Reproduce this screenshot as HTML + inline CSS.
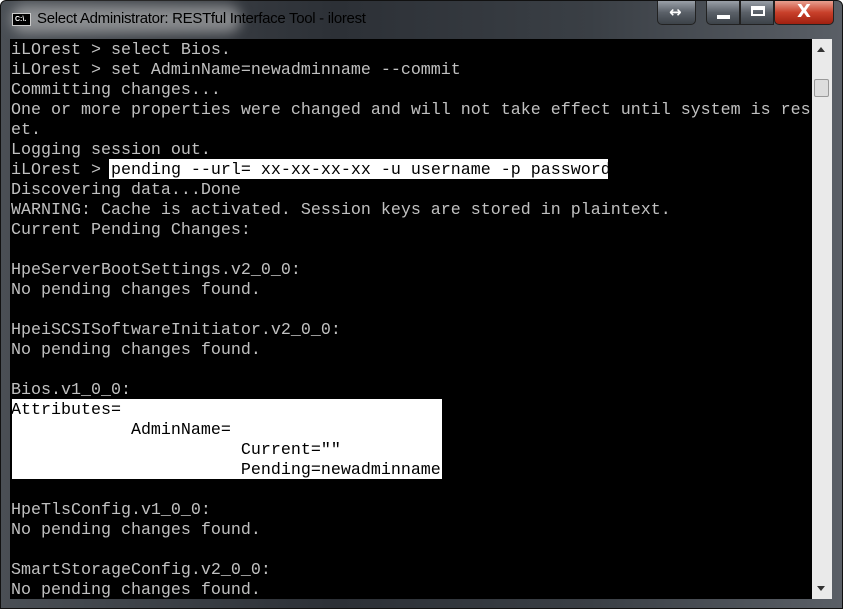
<!DOCTYPE html>
<html><head><style>
html,body{margin:0;padding:0;width:843px;height:609px;overflow:hidden;background:#fff}
.win{position:absolute;left:0;top:0;width:843px;height:609px;background:linear-gradient(90deg,#4a4f55,#2c3036 40%,#3a3f45 70%,#5a5f66);border-radius:6px 6px 0 0;box-sizing:border-box;border:1px solid #111}
.glow{position:absolute;left:10px;top:4px;width:230px;height:28px;background:rgba(200,200,200,0.55);filter:blur(6px);border-radius:14px}
.title{position:absolute;left:36px;top:9px;font:15px "Liberation Sans",sans-serif;color:#000;letter-spacing:-0.3px}
.ico{position:absolute;left:11px;top:12px;width:19px;height:13px;background:#000;border:1px solid #ccc;box-sizing:border-box;color:#fff;font:bold 7px "Liberation Sans",sans-serif;line-height:11px;padding-left:2px}
.btn{position:absolute;top:0;height:24px;border:1px solid #222;border-top:none;border-radius:0 0 5px 5px;box-sizing:border-box;background:linear-gradient(#9aa0a8,#5a6068 50%,#3c4248)}
.content{position:absolute;left:9px;top:38px;width:802px;height:560px;background:#000;overflow:hidden}
.sb{position:absolute;left:811px;top:38px;width:20px;height:560px;background:#eaeaea}
pre{margin:0;position:absolute;left:1px;top:2px;font:16.67px/20px "Liberation Mono",monospace;color:#c0c0c0;white-space:pre}
.hl{position:absolute;background:#fff}
.k{color:#000}
</style></head><body>
<div class="win">
<div class="glow"></div>
<div class="ico">C:\.</div>
<div class="title">Select Administrator: RESTful Interface Tool - ilorest</div>
<div class="btn" style="left:656px;width:39px"><span style="position:absolute;left:11px;top:2px;color:#fff;font:bold 15px 'DejaVu Sans',sans-serif">↔</span></div>
<div class="btn" style="left:705px;width:34px;border-radius:0 0 0 5px"><div style="position:absolute;left:10px;top:14px;width:13px;height:4px;background:#fff"></div></div>
<div class="btn" style="left:739px;width:34px;border-radius:0"><div style="position:absolute;left:10px;top:5px;width:14px;height:10px;border:2px solid #fff;border-top-width:4px;box-sizing:border-box"></div></div>
<div class="btn" style="left:773px;width:60px;background:linear-gradient(#e8a090,#c8402a 50%,#a02010)"><span style="position:absolute;left:22px;top:0px;color:#fff;font:bold 18px 'DejaVu Sans',sans-serif">X</span></div>
<div class="content">
<div class="hl" style="left:99px;top:120px;width:499px;height:20px"></div>
<div class="hl" style="left:2px;top:360px;width:430px;height:80px"></div>
<pre>iLOrest > select Bios.
iLOrest > set AdminName=newadminname --commit
Committing changes...
One or more properties were changed and will not take effect until system is res
et.
Logging session out.
iLOrest > <span class="k">pending --url= xx-xx-xx-xx -u username -p password</span>
Discovering data...Done
WARNING: Cache is activated. Session keys are stored in plaintext.
Current Pending Changes:

HpeServerBootSettings.v2_0_0:
No pending changes found.

HpeiSCSISoftwareInitiator.v2_0_0:
No pending changes found.

Bios.v1_0_0:
<span class="k">Attributes=
            AdminName=
                       Current=""
                       Pending=newadminname</span>

HpeTlsConfig.v1_0_0:
No pending changes found.

SmartStorageConfig.v2_0_0:
No pending changes found.</pre>
</div>
<div class="sb">
<div style="position:absolute;left:5px;top:8px;border:4px solid transparent;border-bottom:5px solid #333;border-top:none"></div>
<div style="position:absolute;left:2px;top:40px;width:15px;height:18px;background:#ddd;border:1px solid #999;border-radius:2px;box-sizing:border-box"></div>
<div style="position:absolute;left:5px;top:547px;border:4px solid transparent;border-top:5px solid #333;border-bottom:none"></div>
</div>
</div>
</body></html>
